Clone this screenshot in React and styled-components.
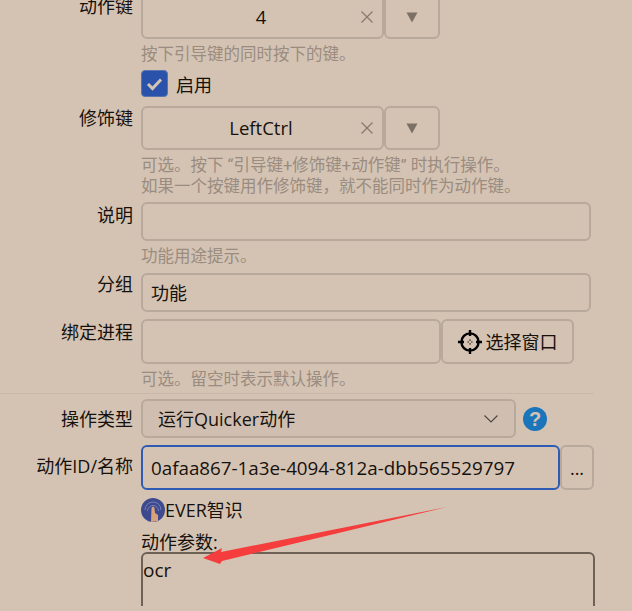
import React from 'react';
import styled, {createGlobalStyle} from 'styled-components';

const GlobalStyle = createGlobalStyle`
    html, body {
        margin: 0;
        padding: 0;
        height: 611px;
        overflow: hidden;
        background: #d4c3b3;
    }
    * {
        box-sizing: border-box;
    }
`
const Page = styled.div`
    position: relative;
    width: 632px;
    height: 611px;
    overflow: hidden;
    margin-top: -5px;
    color: #16110d;
    font-family: "Open Sans", "Noto Sans CJK SC", sans-serif;
    font-size: 18px;
    line-height: 22px;
`
const Row = styled.div`
    display: grid;
    grid-template-columns: 133px 1fr;
    column-gap: 8px;
    margin-top: ${props => props.$top || 0}px;
`
const Label = styled.div`
    text-align: right;
    padding-top: ${props => props.$pad || 0}px;
    white-space: nowrap;
`
const Field = styled.div`
    display: flex;
    width: ${props => props.$width}px;
`
const Box = styled.div`
    flex: 1;
    display: flex;
    align-items: center;
    height: ${props => props.$height}px;
    padding: 0 8px;
    border: 2px solid ${props => props.$focus ? '#2f5bb5' : '#b7a99b'};
    border-radius: 6px;
    white-space: nowrap;
`
const KeyValue = styled.span`
    flex: 1;
    text-align: center;
    padding-left: 11px;
    font-size: 18.5px;
`
const IdValue = styled.span`
    font-size: 18.8px;
`
const SmallButton = styled.div`
    flex: none;
    width: ${props => props.$width}px;
    height: ${props => props.$height}px;
    display: flex;
    align-items: center;
    justify-content: center;
    gap: 4px;
    border: 2px solid #b7a99b;
    border-radius: 6px;
`
const Hint = styled.div`
    color: #9a8c80;
    font-family: "Roboto", "Noto Sans CJK SC", sans-serif;
    font-size: 16.5px;
    line-height: 21px;
    margin-top: 5px;
    white-space: nowrap;
`
const CheckRow = styled.div`
    display: flex;
    align-items: center;
    gap: 8px;
    margin-top: 5px;
`
const CheckText = styled.span`
    padding-top: 2px;
`
const CheckBox = styled.div`
    width: 27px;
    height: 27px;
    display: flex;
    align-items: center;
    justify-content: center;
    background: #2a52ab;
    border: 1px solid #5a74b0;
    border-radius: 4px;
`
const Divider = styled.div`
    height: 1px;
    width: 594px;
    margin-top: 3px;
    background: #c8b8a8;
`
const SelectBox = styled(Box)`
    justify-content: space-between;
    padding: 0 16px 0 15px;
    background: #d0bfb0;
`
const HelpIcon = styled.div`
    flex: none;
    margin-left: 7px;
    align-self: center;
    width: 24px;
    height: 24px;
    display: flex;
    align-items: center;
    justify-content: center;
    border-radius: 50%;
    background: #1b75bb;
    color: #d4c3b3;
    font-family: "Liberation Sans", sans-serif;
    font-size: 20px;
    font-weight: bold;
`
const ActionName = styled.div`
    display: flex;
    align-items: center;
    height: 24px;
    margin-top: 8px;
`
const ParamsLabel = styled.div`
    height: 21px;
    margin-top: 9px;
`
const ParamsBox = styled.div`
    width: 454px;
    height: 80px;
    padding: 5px 0 0;
    border: 2px solid #6e6155;
    border-radius: 6px 6px 0 0;
    font-size: 19px;
`
const ArrowOverlay = styled.svg`
    position: absolute;
    left: 0;
    top: 5px;
    pointer-events: none;
`

const ClearIcon = () => (
    <svg width="14" height="14" viewBox="0 0 14 14">
        <path d="M1.5 1.5 L12.5 12.5 M12.5 1.5 L1.5 12.5" stroke="#85786c" strokeWidth="1.2" fill="none" />
    </svg>
);

const DownTriangle = () => (
    <svg width="12" height="11" viewBox="0 0 12 11">
        <path d="M0.5 0.5 H11.5 L6 10.5 Z" fill="#7d7065" />
    </svg>
);

const KeyField = ({value, height}) => (
    <Field $width={299}>
        <Box $height={height}>
            <KeyValue>{value}</KeyValue>
            <ClearIcon />
        </Box>
        <SmallButton $width={56} $height={height}><DownTriangle /></SmallButton>
    </Field>
);

const Crosshair = () => (
    <svg width="24" height="24" viewBox="0 0 24 24">
        <circle cx="12" cy="12" r="8.6" stroke="#000" strokeWidth="2.4" fill="none" />
        <path d="M12 0 V6 M12 18 V24 M0 12 H6 M18 12 H24" stroke="#000" strokeWidth="2.4" />
        <path d="M12 9.5 V10.8 M12 13.2 V14.5 M9.5 12 H10.8 M13.2 12 H14.5" stroke="#000" strokeWidth="1.2" />
    </svg>
);

const EverLogo = () => (
    <svg width="24" height="24" viewBox="0 0 24 24">
        <circle cx="12" cy="12" r="12" fill="#3e4a8e" />
        <path d="M4 12 A8 8 0 0 1 20 12 M6.5 13 A5.5 5.5 0 0 1 17.5 13" stroke="#7480b5" strokeWidth="1" fill="none" />
        <path d="M10 24 L10.5 10 Q12 7 13.5 10 L14 15 L17 17 L17 23 Z" fill="#d9a27c" />
    </svg>
);

const App = () => {
    return (
        <Page>
            <GlobalStyle />
            <Row>
                <Label $pad={0}>动作键</Label>
                <div>
                    <KeyField value="4" height={44} />
                    <Hint>按下引导键的同时按下的键。</Hint>
                </div>
            </Row>
            <Row>
                <div />
                <CheckRow>
                    <CheckBox>
                        <svg width="17" height="14" viewBox="0 0 17 14">
                            <path d="M2 7 L6.5 11.5 L15 2.5" stroke="#d4c3b3" strokeWidth="3" fill="none" />
                        </svg>
                    </CheckBox>
                    <CheckText>启用</CheckText>
                </CheckRow>
            </Row>
            <Row $top={9}>
                <Label $pad={1}>修饰键</Label>
                <div>
                    <KeyField value="LeftCtrl" height={44} />
                    <Hint>可选。按下 “引导键+修饰键+动作键” 时执行操作。<br />如果一个按键用作修饰键，就不能同时作为动作键。</Hint>
                </div>
            </Row>
            <Row $top={5}>
                <Label $pad={2}>说明</Label>
                <div>
                    <Field $width={450}><Box $height={39} /></Field>
                    <Hint>功能用途提示。</Hint>
                </div>
            </Row>
            <Row $top={6}>
                <Label $pad={0}>分组</Label>
                <Field $width={450}><Box $height={39}>功能</Box></Field>
            </Row>
            <Row $top={7}>
                <Label $pad={2}>绑定进程</Label>
                <div>
                    <Field $width={433}>
                        <Box $height={45} />
                        <SmallButton $width={133} $height={45}>
                            <Crosshair />选择窗口
                        </SmallButton>
                    </Field>
                    <Hint>可选。留空时表示默认操作。</Hint>
                </div>
            </Row>
            <Divider />
            <Row $top={5}>
                <Label $pad={9}>操作类型</Label>
                <Field $width={406}>
                    <SelectBox $height={39}>
                        运行Quicker动作
                        <svg width="14" height="8" viewBox="0 0 14 8">
                            <path d="M0.5 0.5 L7 7 L13.5 0.5" stroke="#4d453d" strokeWidth="1.1" fill="none" />
                        </svg>
                    </SelectBox>
                    <HelpIcon>?</HelpIcon>
                </Field>
            </Row>
            <Row $top={7}>
                <Label $pad={10}>动作ID/名称</Label>
                <div>
                    <Field $width={453}>
                        <Box $height={45} $focus><IdValue>0afaa867-1a3e-4094-812a-dbb565529797</IdValue></Box>
                        <SmallButton $width={34} $height={45}>...</SmallButton>
                    </Field>
                    <ActionName><EverLogo />EVER智识</ActionName>
                    <ParamsLabel>动作参数:</ParamsLabel>
                    <ParamsBox>ocr</ParamsBox>
                </div>
            </Row>
            <ArrowOverlay width="632" height="611" viewBox="0 0 632 611">
                <path d="M203 558 L222 548 L221 552 L447 507 L222 561 L220 564 Z" fill="#f53d3d" />
            </ArrowOverlay>
        </Page>
    );
};

export default App;
